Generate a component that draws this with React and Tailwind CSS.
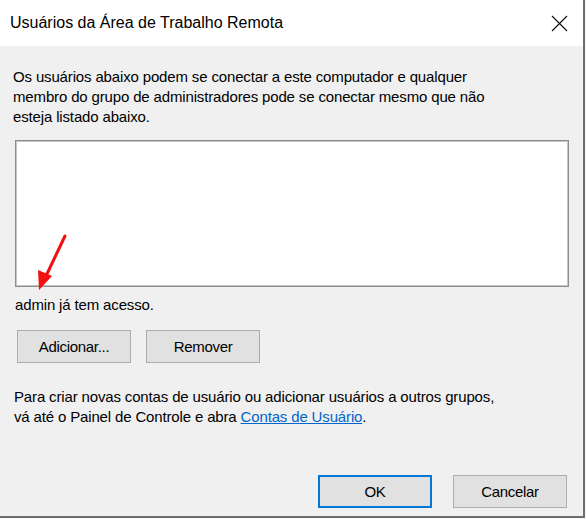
import React from 'react';

const font = { fontFamily: '"Liberation Sans", Arial, sans-serif' };

function WinButton({ children, primary }) {
  return (
    <button
      className={`w-[114px] h-[33px] bg-[#e1e1e1] text-[15px] tracking-[-0.3px] text-black flex items-center justify-center ${
        primary ? 'border-2 border-[#0078d7]' : 'border border-[#adadad]'
      }`}
    >
      {children}
    </button>
  );
}

export default function App() {
  return (
    <div className="w-[586px] h-[519px] bg-[#f4f4f4] overflow-hidden relative" style={font}>
      <div className="w-[585px] h-[518px] flex flex-col bg-[#f0f0f0] border-r-2 border-b-2 border-[#6e6e6e]">
        {/* Title bar */}
        <div className="h-[46px] bg-white flex items-center justify-between pl-[10px] pr-[15px] shrink-0">
          <span className="text-[16px] text-black">Usuários da Área de Trabalho Remota</span>
          <svg width="17" height="17" viewBox="0 0 17 17" className="mt-[1px]">
            <path d="M1 1 L16 16 M16 1 L1 16" stroke="#111" strokeWidth="1.2" fill="none" />
          </svg>
        </div>

        {/* Body */}
        <div className="flex-1 flex flex-col text-[15px] leading-[20px] tracking-[-0.15px] text-black">
          <p className="pl-[13px] pt-[21px] whitespace-nowrap">
            Os usuários abaixo podem se conectar a este computador e qualquer
            <br />
            membro do grupo de administradores pode se conectar mesmo que não
            <br />
            esteja listado abaixo.
          </p>

          <div className="ml-[15px] mt-[13px] w-[554px] h-[147px] bg-white border border-[#8c8c8c] shadow-[inset_0_0_0_1px_#c4c4c4]" />

          <p className="pl-[15px] mt-[8px]">admin já tem acesso.</p>

          <div className="flex gap-[15px] ml-[17px] mt-[15px]">
            <WinButton>Adicionar...</WinButton>
            <WinButton>Remover</WinButton>
          </div>

          <p className="pl-[14px] mt-[24px] whitespace-nowrap">
            Para criar novas contas de usuário ou adicionar usuários a outros grupos,
            <br />
            vá até o Painel de Controle e abra <a className="text-[#0066cc] underline">Contas de Usuário</a>.
          </p>

          <div className="mt-auto flex justify-end gap-[21px] pr-[16px] pb-[8px]">
            <WinButton primary>OK</WinButton>
            <WinButton>Cancelar</WinButton>
          </div>
        </div>
      </div>

      {/* red annotation arrow */}
      <svg className="absolute left-0 top-0 pointer-events-none" width="586" height="519">
        <line x1="65" y1="236" x2="46" y2="276" stroke="#f01010" strokeWidth="3" strokeLinecap="round" />
        <polygon points="39,290 38,270 52,276" fill="#f01010" />
      </svg>
    </div>
  );
}
